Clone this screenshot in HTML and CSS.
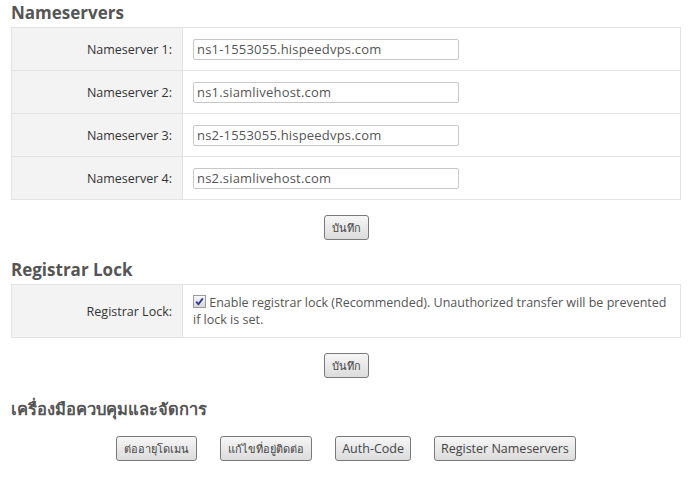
FILE: index.html
```html
<!DOCTYPE html>
<html lang="th">

<head>
    <meta charset="UTF-8">
    <meta name="viewport" content="width=device-width, initial-scale=1.0">
    <title>Domain Details</title>
    <link rel="stylesheet" href="styles.css">
</head>

<body>
    <div class="page">

        <h2>Nameservers</h2>
        <table class="frame">
            <tr>
                <td class="label">Nameserver 1:</td>
                <td class="field"><input type="text" value="ns1-1553055.hispeedvps.com"></td>
            </tr>
            <tr>
                <td class="label">Nameserver 2:</td>
                <td class="field"><input type="text" value="ns1.siamlivehost.com"></td>
            </tr>
            <tr>
                <td class="label">Nameserver 3:</td>
                <td class="field"><input type="text" value="ns2-1553055.hispeedvps.com"></td>
            </tr>
            <tr>
                <td class="label">Nameserver 4:</td>
                <td class="field"><input type="text" value="ns2.siamlivehost.com"></td>
            </tr>
        </table>
        <div class="actions">
            <button class="th">บันทึก</button>
        </div>

        <h2>Registrar Lock</h2>
        <table class="frame">
            <tr>
                <td class="label">Registrar Lock:</td>
                <td class="field lock">
                    <label><span class="check"><svg width="11" height="11" viewBox="0 0 11 11"><path d="M2.2 5.6 L4.4 8.2 L8.8 2.4" fill="none" stroke="#2a3d9c" stroke-width="1.8"/></svg></span> Enable registrar lock (Recommended). Unauthorized transfer will be prevented if lock is set.</label>
                </td>
            </tr>
        </table>
        <div class="actions last">
            <button class="th">บันทึก</button>
        </div>

        <h2 class="th-head">เครื่องมือควบคุมและจัดการ</h2>
        <div class="actions tools">
            <button class="th">ต่ออายุโดเมน</button>
            <button class="th">แก้ไขที่อยู่ติดต่อ</button>
            <button>Auth-Code</button>
            <button>Register Nameservers</button>
        </div>

    </div>
</body>

</html>
```

FILE: styles.css
```css
* {
    box-sizing: border-box;
}

body {
    margin: 0;
    background: #fff;
    font-family: 'Open Sans', Tahoma, sans-serif;
    font-size: 12px;
    color: #333;
}

.page {
    width: 670px;
    margin-left: 11px;
    padding-top: 3px;
}

h2 {
    margin: 0 0 4px 0;
    font-size: 17px;
    font-weight: 700;
    color: #555;
    line-height: 20px;
}

.th-head {
    font-size: 16.5px;
}

.frame {
    width: 100%;
    border-collapse: collapse;
    border: 1px solid #e3e3e3;
}

.frame td {
    border-top: 1px solid #e3e3e3;
    padding: 0 10px;
    height: 43px;
}

.label {
    width: 171px;
    background: #f3f3f3;
    text-align: right;
    border-right: 1px solid #e3e3e3;
    font-size: 12.5px;
    color: #333;
}

input {
    width: 266px;
    height: 21px;
    border: 1px solid #c8c8c8;
    border-radius: 2px;
    padding: 0 3px;
    font-family: 'Open Sans', Tahoma, sans-serif;
    font-size: 13px;
    letter-spacing: 0.2px;
    color: #555;
}

.lock {
    padding: 8px 10px;
    line-height: 17px;
    font-size: 12.5px;
    color: #555;
}

.frame td.lock {
    height: 53px;
}

.check {
    display: inline-block;
    width: 13px;
    height: 13px;
    border: 1px solid #9a9a9a;
    background: linear-gradient(#f7f7f7, #d8d8d8);
    vertical-align: -1px;
    position: relative;
}

.check svg {
    position: absolute;
    left: 0;
    top: 0;
}

.actions {
    display: flex;
    justify-content: center;
    gap: 23px;
    padding: 15px 0 20px 0;
}

.last {
    padding-bottom: 21px;
}

.tools {
    padding-top: 13px;
}

button {
    height: 25px;
    padding: 0 6px;
    border: 1px solid #7a7a7a;
    border-radius: 3px;
    background: linear-gradient(#f6f6f6, #dcdcdc);
    font-family: 'Open Sans', Tahoma, sans-serif;
    font-size: 12.5px;
    color: #444;
}

button.th {
    font-size: 11px;
    padding: 0 7px;
}
```
